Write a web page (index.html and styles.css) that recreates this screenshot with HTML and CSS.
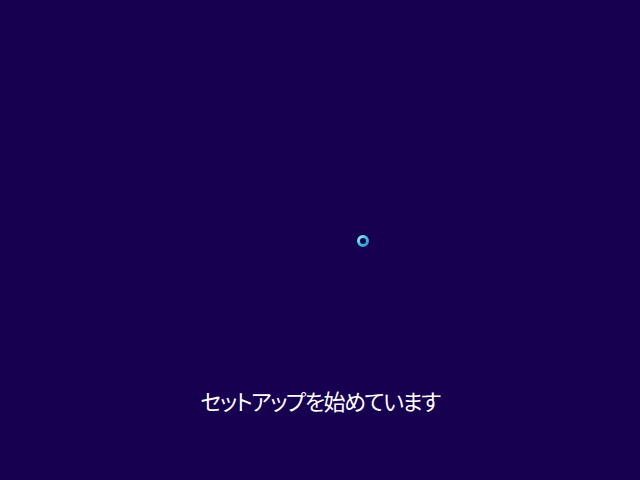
FILE: index.html
```html
<!DOCTYPE html>
<html lang="ja">
<head>
<meta charset="utf-8">
<link rel="stylesheet" href="styles.css">
</head>
<body>
<div class="screen">
  <div class="spinner-area">
    <svg class="spinner" width="14" height="14" viewBox="0 0 14 14">
      <defs>
        <linearGradient id="g" x1="0" y1="0" x2="1" y2="1">
          <stop offset="0" stop-color="#a8e8f4"/>
          <stop offset="0.5" stop-color="#3cc0dc"/>
          <stop offset="1" stop-color="#2a9cc4"/>
        </linearGradient>
      </defs>
      <circle cx="7" cy="7" r="4.5" fill="none" stroke="url(#g)" stroke-width="3"/>
    </svg>
  </div>
  <div class="message">セットアップを始めています</div>
</div>
</body>
</html>
```
FILE: styles.css
```css
html, body {
  margin: 0;
  padding: 0;
  background: #180050;
}
.screen {
  width: 640px;
  height: 480px;
  background: #180050;
  display: flex;
  flex-direction: column;
  align-items: center;
}
.spinner-area {
  padding-top: 234px;
  padding-left: 86px;
  height: 14px;
}
.spinner {
  display: block;
}
.message {
  margin-top: 137px;
  color: #ffffff;
  font-family: "Noto Sans CJK JP", sans-serif;
  font-size: 22px;
  line-height: 30px;
  letter-spacing: -1.5px;
  font-feature-settings: "palt";
}
```
